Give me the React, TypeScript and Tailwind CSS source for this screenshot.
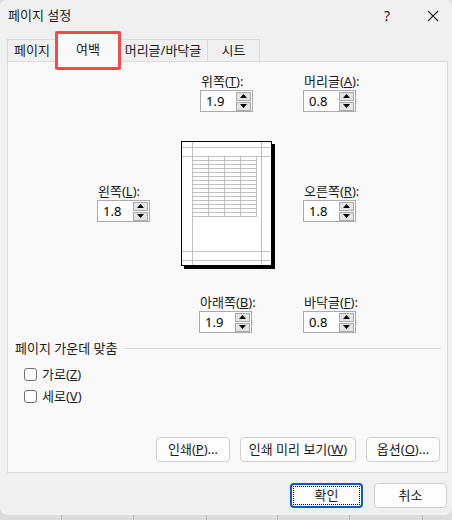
import React from "react";

const Spin = () => (
  <div className="flex flex-col w-[15px] h-[19px] my-auto mr-[1px] gap-[1px]">
    <div className="flex-1 flex items-center justify-center bg-[#e4e4e4] border border-[#a9a9a9]">
      <svg width="7" height="4" viewBox="0 0 7 4">
        <path d="M3.5 0 L7 4 L0 4 Z" fill="#000" />
      </svg>
    </div>
    <div className="flex-1 flex items-center justify-center bg-[#e4e4e4] border border-[#a9a9a9]">
      <svg width="7" height="4" viewBox="0 0 7 4">
        <path d="M0 0 L7 0 L3.5 4 Z" fill="#000" />
      </svg>
    </div>
  </div>
);

const Field = ({
  label,
  keyChar,
  value,
}: {
  label: string;
  keyChar: string;
  value: string;
}) => (
  <div className="flex flex-col w-[53px]">
    <div className="text-[13px] leading-[18px] text-[#1a1a1a] pl-[1px] whitespace-nowrap">
      {label}(<u>{keyChar}</u>):
    </div>
    <div className="w-[53px] h-[22px] border border-[#ababab] bg-white flex">
      <div className="flex-1 pl-[5px] text-[13px] leading-[20px] text-black">
        {value}
      </div>
      <Spin />
    </div>
  </div>
);

const PagePreview = () => {
  const rows: number[] = [];
  for (let y = 15; y <= 75; y += 4) rows.push(y);
  const cols = [11, 27, 43, 59, 75];
  return (
    <svg width="94" height="128" viewBox="0 0 94 128">
      <rect x="3" y="3" width="91" height="125" fill="#000" />
      <rect x="0.5" y="0.5" width="90" height="124" fill="#fff" stroke="#000" />
      <g stroke="#c0c0c0" strokeWidth="1">
        <line x1="11.5" y1="1" x2="11.5" y2="124" />
        <line x1="80.5" y1="1" x2="80.5" y2="124" />
        <line x1="1" y1="6.5" x2="90" y2="6.5" />
        <line x1="1" y1="15.5" x2="90" y2="15.5" />
        <line x1="1" y1="110.5" x2="90" y2="110.5" />
        <line x1="1" y1="119.5" x2="90" y2="119.5" />
        {rows.map((y) => (
          <line key={y} x1="11" y1={y + 0.5} x2="75.5" y2={y + 0.5} />
        ))}
        {cols.map((x) => (
          <line key={x} x1={x + 0.5} y1="15" x2={x + 0.5} y2="76" />
        ))}
      </g>
    </svg>
  );
};

const Checkbox = ({ label, keyChar }: { label: string; keyChar: string }) => (
  <div className="flex items-center h-[22px]">
    <div className="w-[13px] h-[13px] border border-[#707070] rounded-[3px] bg-white" />
    <div className="ml-[5px] text-[13px] leading-[18px] text-[#1a1a1a]">
      {label}(<u>{keyChar}</u>)
    </div>
  </div>
);

const Btn = ({ children, w }: { children: React.ReactNode; w: string }) => (
  <div
    className={`${w} h-[25px] border border-[#d0d0d0] rounded-[4px] bg-[#fdfdfd] flex items-center justify-center text-[13px] text-[#1a1a1a]`}
  >
    {children}
  </div>
);

export default function App() {
  return (
    <div className="relative w-[452px] h-[520px] overflow-hidden bg-[#dcdcdc] font-['Noto_Sans','Noto_Sans_CJK_KR',sans-serif]">
      <div className="flex">
        {[62, 72, 73, 71, 72, 73].map((w, i) => (
          <div key={i} className="h-[520px] border-r border-[#bdbdbd]" style={{ width: w }} />
        ))}
      </div>
      <div className="absolute inset-x-0 top-0 h-[515px] bg-[#f0f0f0] rounded-b-[8px] rounded-t-[6px] flex flex-col">
        <div className="h-[31px] flex items-center px-[8px] text-[13px] text-[#1a1a1a]">
          <div className="flex-1">페이지 설정</div>
          <div className="w-[20px] text-center mr-[30px] text-[14px]">?</div>
          <svg width="12" height="12" viewBox="0 0 12 12" className="mr-[5px]">
            <path d="M1 1 L11 11 M11 1 L1 11" stroke="#1a1a1a" strokeWidth="1.1" />
          </svg>
        </div>

        <div className="flex items-end h-[30px] pl-[7px] text-[13px] text-[#1a1a1a] relative z-10">
          <div className="w-[50px] h-[22px] border border-b-0 border-[#d9d9d9] flex items-center justify-center">
            페이지
          </div>
          <div className="w-[62px] h-[29px] -mb-[1px] border border-b-0 border-[#d9d9d9] bg-[#f9f9f9] flex items-start pt-[6px] justify-center">
            여백
          </div>
          <div className="w-[89px] h-[22px] border border-b-0 border-l-0 border-[#d9d9d9] flex items-center justify-center">
            머리글/바닥글
          </div>
          <div className="w-[52px] h-[22px] border border-b-0 border-l-0 border-[#d9d9d9] flex items-center justify-center">
            시트
          </div>
        </div>

        <div className="ml-[7px] w-[441px] h-[412px] border border-[#dcdcdc] bg-[#f9f9f9] flex flex-col">
          <div className="flex pt-[10px] pl-[192px] gap-[50px]">
            <Field label="위쪽" keyChar="T" value="1.9" />
            <Field label="머리글" keyChar="A" value="0.8" />
          </div>

          <div className="flex items-center mt-[29px] pl-[89px]">
            <div className="-mt-[6px]">
              <Field label="왼쪽" keyChar="L" value="1.8" />
            </div>
            <div className="ml-[31px]">
              <PagePreview />
            </div>
            <div className="ml-[28px] -mt-[6px]">
              <Field label="오른쪽" keyChar="R" value="1.8" />
            </div>
          </div>

          <div className="flex mt-[24px] pl-[191px] gap-[51px]">
            <Field label="아래쪽" keyChar="B" value="1.9" />
            <Field label="바닥글" keyChar="F" value="0.8" />
          </div>

          <div className="flex items-center mt-[6px] pl-[7px] pr-[6px]">
            <div className="text-[13px] leading-[18px] text-[#1a1a1a]">
              페이지 가운데 맞춤
            </div>
            <div className="flex-1 ml-[6px] h-[1px] bg-[#dcdcdc]" />
          </div>

          <div className="flex flex-col pl-[16px] mt-[6px]">
            <Checkbox label="가로" keyChar="Z" />
            <Checkbox label="세로" keyChar="V" />
          </div>

          <div className="mt-auto mb-[10px] flex justify-end gap-[10px] pr-[7px]">
            <Btn w="w-[74px]">
              인쇄(<u>P</u>)...
            </Btn>
            <Btn w="w-[116px]">
              인쇄 미리 보기(<u>W</u>)
            </Btn>
            <Btn w="w-[74px]">
              옵션(<u>O</u>)...
            </Btn>
          </div>
        </div>

        <div className="flex justify-end gap-[11px] pr-[5px] mt-[10px]">
          <div className="w-[73px] h-[25px] border-2 border-[#005fb8] rounded-[4px] bg-[#fdfdfd] p-[1px]">
            <div className="w-full h-full border border-dotted border-black flex items-center justify-center text-[13px] text-[#1a1a1a]">
              확인
            </div>
          </div>
          <Btn w="w-[73px]">취소</Btn>
        </div>
      </div>

      <div className="absolute left-[55px] top-[31px] w-[66px] h-[39px] border-[3px] border-[#f24b4b] rounded-[2px] z-20" />
    </div>
  );
}
